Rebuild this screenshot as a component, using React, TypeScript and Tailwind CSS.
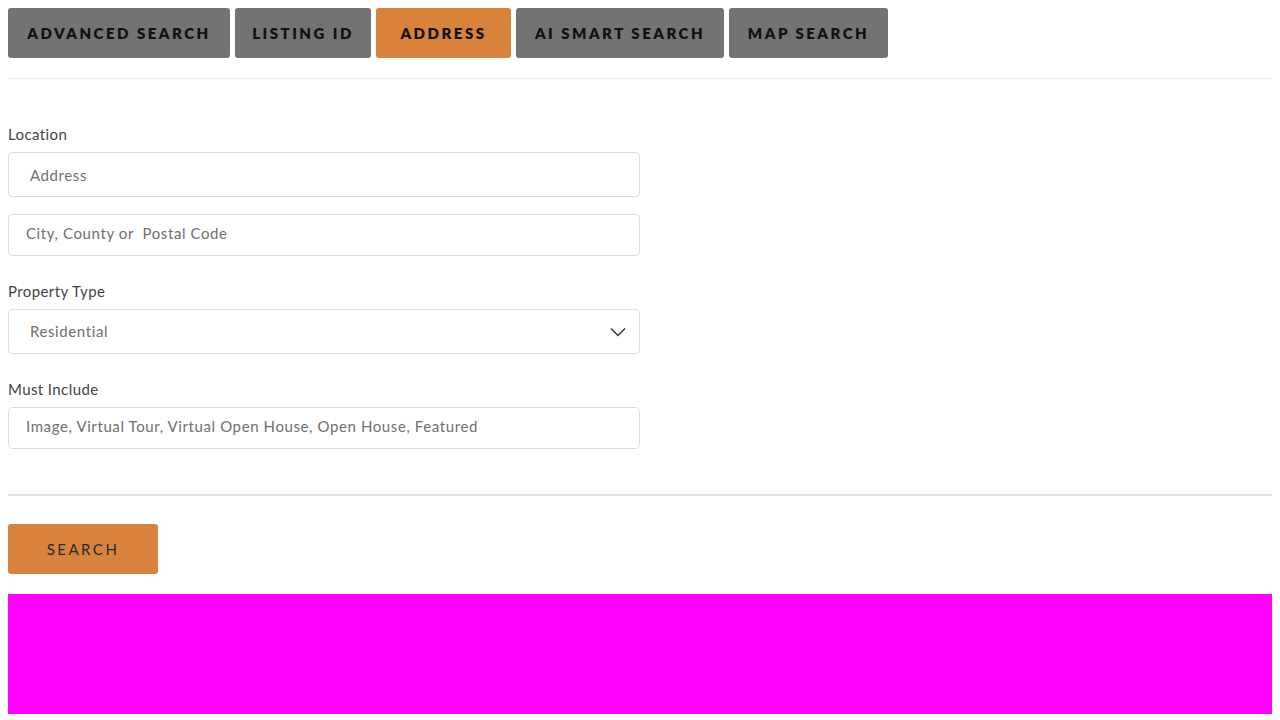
import React from "react";

const tabs = [
  { label: "Advanced Search", w: "w-[222px]" },
  { label: "Listing ID", w: "w-[136px]" },
  { label: "Address", w: "w-[135px]" },
  { label: "AI Smart Search", w: "w-[208px]" },
  { label: "Map Search", w: "w-[159px]" },
];

const font = { fontFamily: "Lato, 'Noto Sans', sans-serif" };

const Field = ({ placeholder, tall, pad }: { placeholder: string; tall?: boolean; pad?: string }) => (
  <div
    className={`flex w-[632px] items-center whitespace-pre rounded border border-[#dddddd] bg-white text-[15px] tracking-[0.6px] text-[#707070] ${
      tall ? "h-[45px] pt-px" : "h-[42px] pb-[3px]"
    } ${pad ?? "pl-[17px]"}`}
  >
    {placeholder}
  </div>
);

const App = () => {
  return (
    <div className="min-h-[720px] bg-white px-2 pt-2" style={font}>
      <div className="flex gap-[5px]">
        {tabs.map((t, i) => (
          <button
            key={t.label}
            className={`h-[50px] ${t.w} rounded-[3px] text-center text-[15px] font-extrabold uppercase tracking-[2.5px] text-[#111] ${
              i === 2 ? "bg-[#d8823b]" : "bg-[#737373]"
            }`}
          >
            {t.label}
          </button>
        ))}
      </div>
      <div className="mt-5 h-px bg-[#ececec]" />

      <div className="pt-[45px] text-[#444]">
        <label className="block text-[15px] leading-[20px] tracking-[0.4px]">Location</label>
        <div className="mt-[8px]">
          <Field placeholder="Address" tall pad="pl-[21px]" />
        </div>
        <div className="mt-[17px]">
          <Field placeholder="City, County or  Postal Code" />
        </div>

        <label className="mt-[25px] block text-[15px] leading-[20px] tracking-[0.4px]">Property Type</label>
        <div className="mt-[8px] flex h-[45px] w-[632px] items-center justify-between rounded border border-[#dddddd] pl-[21px] pr-[13px] text-[15px] tracking-[0.6px] text-[#707070]">
          <span>Residential</span>
          <svg width="16" height="10" viewBox="0 0 16 10" fill="none">
            <path d="M1 1.5l7 7 7-7" stroke="#333" strokeWidth="1.4" />
          </svg>
        </div>

        <label className="mt-[25px] block text-[15px] leading-[20px] tracking-[0.4px]">Must Include</label>
        <div className="mt-[8px]">
          <Field placeholder="Image, Virtual Tour, Virtual Open House, Open House, Featured" />
        </div>
      </div>

      <div className="mt-[45px] h-[2px] bg-[#e3e3e3]" />

      <button className="mt-[28px] h-[50px] w-[150px] rounded-[3px] bg-[#d8823b] text-[15px] uppercase tracking-[2.5px] text-[#2a2a2a]">
        Search
      </button>

      <div className="mt-5 h-[120px] bg-[#ff00ff]" />
    </div>
  );
};

export default App;
